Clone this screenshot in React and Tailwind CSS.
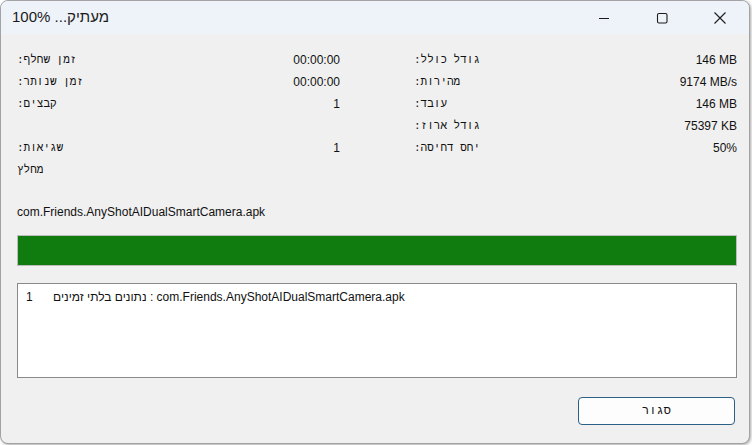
import React from 'react'

const LEFT_ROWS = [
  ['זמן שחלף:', '00:00:00'],
  ['זמן שנותר:', '00:00:00'],
  ['קבצים:', '1'],
  ['', ''],
  ['שגיאות:', '1'],
  ['מחלץ', ''],
]

const RIGHT_ROWS = [
  ['גודל כולל:', '146 MB'],
  ['מהירות:', '9174 MB/s'],
  ['עובד:', '146 MB'],
  ['גודל ארוז:', '75397 KB'],
  ['יחס דחיסה:', '50%'],
  ['', ''],
]

const HEB = { fontFamily: '"Liberation Mono", "Liberation Sans", monospace' }

function InfoColumn({ rows }) {
  return (
    <div className="flex flex-col">
      {rows.map(([label, value], i) => (
        <div key={i} className="h-[22px] flex items-center justify-between">
          <span dir="rtl" className="text-[11px]" style={HEB}>{label}</span>
          <span>{value}</span>
        </div>
      ))}
    </div>
  )
}

function CaptionButton({ children }) {
  return (
    <div className="w-[58px] h-full flex items-center justify-center text-[#1b1b1b]">
      {children}
    </div>
  )
}

export default function App() {
  return (
    <div className="w-[752px] h-[445px] bg-white overflow-hidden" style={{ fontFamily: '"Liberation Sans", Arial, sans-serif' }}>
      <div className="w-[750px] h-[444px] bg-[#f0f0f0] border border-[#a3a3a3] rounded-[8px] overflow-hidden flex flex-col shadow-[1px_1px_3px_rgba(0,0,0,0.35)]">
        {/* Title bar */}
        <div className="h-[33px] shrink-0 bg-[#eef3f9] flex items-center justify-between">
          <div dir="rtl" className="pl-[11px] text-[15px] text-[#1a1a1a]">מעתיק... 100%</div>
          <div className="flex h-full">
            <CaptionButton>
              <svg width="12" height="12" viewBox="0 0 12 12">
                <path d="M1 6.5h10" stroke="currentColor" strokeWidth="1" />
              </svg>
            </CaptionButton>
            <CaptionButton>
              <svg width="12" height="12" viewBox="0 0 12 12">
                <rect x="1.5" y="1.5" width="9.5" height="9.5" rx="1.5" fill="none" stroke="currentColor" strokeWidth="1.1" />
              </svg>
            </CaptionButton>
            <CaptionButton>
              <svg width="14" height="14" viewBox="0 0 14 14">
                <path d="M1.5 1.5l11 11M12.5 1.5l-11 11" stroke="currentColor" strokeWidth="1.1" />
              </svg>
            </CaptionButton>
          </div>
        </div>

        {/* Body */}
        <div className="pl-[16px] pt-[15px] w-[736px] text-[12px] text-[#111]">
          <div className="grid grid-cols-2 gap-x-[74px]">
            <InfoColumn rows={LEFT_ROWS} />
            <InfoColumn rows={RIGHT_ROWS} />
          </div>

          <div className="mt-[20px] h-[22px] flex items-center">com.Friends.AnyShotAIDualSmartCamera.apk</div>

          <div className="mt-[12px] h-[31px] border border-[#bcbcbc] bg-[#e6e6e6]">
            <div className="h-full w-full bg-[#107c10]" />
          </div>

          <div className="mt-[17px] h-[95px] bg-white border border-[#8a8a8a] pt-[5px]">
            <div className="flex items-center h-[16px]">
              <span className="w-[35px] pl-[8px]">1</span>
              <span>נתונים בלתי זמינים : com.Friends.AnyShotAIDualSmartCamera.apk</span>
            </div>
          </div>

          <div className="mt-[19px] flex justify-end pr-[2px]">
            <button className="w-[157px] h-[28px] bg-[#fdfdfd] border border-[#2a5f86] rounded-[4px] text-[12px] text-[#111]" style={HEB}>
              סגור
            </button>
          </div>
        </div>
      </div>
    </div>
  )
}
